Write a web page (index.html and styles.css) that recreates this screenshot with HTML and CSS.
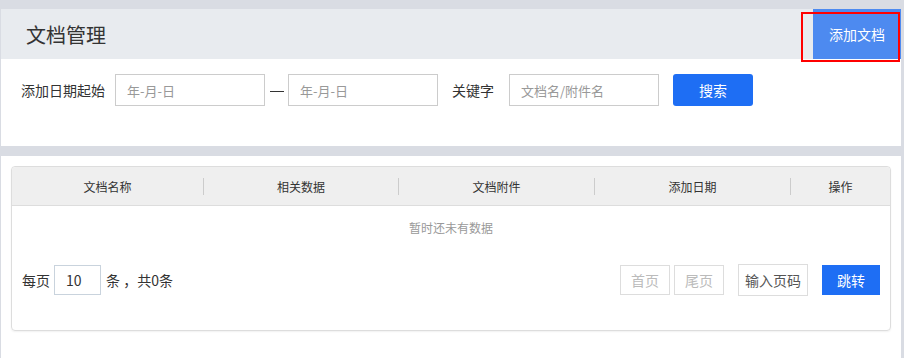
FILE: index.html
```html
<!DOCTYPE html>
<html lang="zh-CN">
<head>
    <meta charset="UTF-8">
    <meta name="viewport" content="width=device-width, initial-scale=1.0">
    <title>文档管理</title>
    <link rel="stylesheet" href="styles.css">
</head>
<body>
<div class="page">
    <div class="panel">
        <div class="header">
            <h1>文档管理</h1>
            <button class="btn-add">添加文档</button>
            <div class="highlight"></div>
        </div>
        <div class="filter">
            <label class="filter-label">添加日期起始</label>
            <input class="field" type="text" placeholder="年-月-日">
            <span class="dash"></span>
            <input class="field" type="text" placeholder="年-月-日">
            <label class="filter-label keyword">关键字</label>
            <input class="field keyword-field" type="text" placeholder="文档名/附件名">
            <button class="btn-search">搜索</button>
        </div>
    </div>

    <div class="panel list-panel">
        <div class="table-box">
            <div class="table-head">
                <div class="col col-1">文档名称</div>
                <div class="col col-2">相关数据</div>
                <div class="col col-3">文档附件</div>
                <div class="col col-4">添加日期</div>
                <div class="col col-5">操作</div>
            </div>
            <div class="empty">暂时还未有数据</div>
            <div class="pager">
                <div class="pager-size">
                    <span>每页</span>
                    <input class="size-field" type="text" value="10">
                    <span>条 ，共0条</span>
                </div>
                <div class="pager-nav">
                    <button class="btn-page" disabled>首页</button>
                    <button class="btn-page" disabled>尾页</button>
                    <input class="page-field" type="text" placeholder="输入页码">
                    <button class="btn-jump">跳转</button>
                </div>
            </div>
        </div>
    </div>
</div>
</body>
</html>
```

FILE: styles.css
```css
body {
    font-family: "Noto Sans CJK SC", "Microsoft YaHei", sans-serif;
    background-color: #d9dce3;
    color: #333;
    margin: 0;
    padding: 9px 3px 0 1px;
    height: 358px;
    box-sizing: border-box;
    overflow: hidden;
}

.panel {
    background: #fff;
}

.header {
    position: relative;
    display: flex;
    justify-content: space-between;
    align-items: center;
    height: 50px;
    background: #e8ebef;
}

.header h1 {
    margin: 0 0 0 25px;
    font-size: 20px;
    font-weight: normal;
    color: #333;
}

.btn-add {
    width: 88px;
    height: 50px;
    border: none;
    background: #4d8af0;
    color: #fff;
    font-family: inherit;
    font-size: 14px;
    padding: 0;
}

.highlight {
    position: absolute;
    left: 800px;
    top: 3px;
    width: 99px;
    height: 50px;
    box-sizing: border-box;
    border: 2px solid #f00;
    pointer-events: none;
}

.filter {
    display: flex;
    align-items: center;
    padding: 15px 0 40px 20px;
    font-size: 14px;
}

.filter-label {
    margin-right: 10px;
}

.keyword {
    margin-left: 14px;
    margin-right: 15px;
}

.field {
    width: 150px;
    height: 32px;
    box-sizing: border-box;
    border: 1px solid #ccc;
    padding: 0 11px;
    font-family: inherit;
    font-size: 13px;
    color: #333;
    outline: none;
}

.field::placeholder {
    color: #999;
}

.dash {
    width: 14px;
    height: 1px;
    margin: 2px 4px 0 5px;
    background: #333;
}

.btn-search {
    width: 80px;
    height: 32px;
    margin-left: 14px;
    border: none;
    border-radius: 3px;
    background: #1e6ef4;
    color: #fff;
    font-family: inherit;
    font-size: 14px;
}

.list-panel {
    margin-top: 10px;
    padding: 10px 10px 0 10px;
    height: 202px;
}

.table-box {
    border: 1px solid #ddd;
    border-radius: 4px;
    box-shadow: 0 1px 2px rgba(0, 0, 0, 0.06);
    padding-bottom: 34px;
}

.table-head {
    display: flex;
    align-items: center;
    height: 38px;
    background: #efefef;
    border-bottom: 1px solid #ddd;
    border-radius: 4px 4px 0 0;
    font-size: 12px;
}

.col {
    text-align: center;
    border-right: 1px solid #ccc;
    line-height: 17px;
}

.col:last-child {
    border-right: none;
}

.col-1 {
    width: 191px;
}

.col-2 {
    width: 194px;
}

.col-3,
.col-4 {
    width: 195px;
}

.col-5 {
    flex: 1;
}

.empty {
    height: 44px;
    line-height: 44px;
    text-align: center;
    font-size: 12px;
    color: #999;
}

.pager {
    display: flex;
    justify-content: space-between;
    align-items: center;
    padding: 14px 10px 0 10px;
    font-size: 14px;
}

.pager-size {
    display: flex;
    align-items: center;
}

.size-field {
    width: 47px;
    height: 30px;
    box-sizing: border-box;
    margin: 0 5px 0 4px;
    border: 1px solid #c9d3dd;
    padding: 0 11px;
    font-family: inherit;
    font-size: 14px;
    color: #333;
}

.pager-nav {
    display: flex;
    align-items: center;
}

.btn-page {
    width: 50px;
    height: 30px;
    margin-right: 4px;
    border: 1px solid #ddd;
    background: #fff;
    color: #bbb;
    font-family: inherit;
    font-size: 14px;
    padding: 0;
}

.page-field {
    width: 70px;
    height: 32px;
    box-sizing: border-box;
    margin: 0 14px 0 10px;
    border: 1px solid #ddd;
    padding: 0 6px;
    font-family: inherit;
    font-size: 14px;
}

.page-field::placeholder {
    color: #555;
}

.btn-jump {
    width: 58px;
    height: 30px;
    border: none;
    background: #1e6ef4;
    color: #fff;
    font-family: inherit;
    font-size: 14px;
    padding: 0;
}
```
